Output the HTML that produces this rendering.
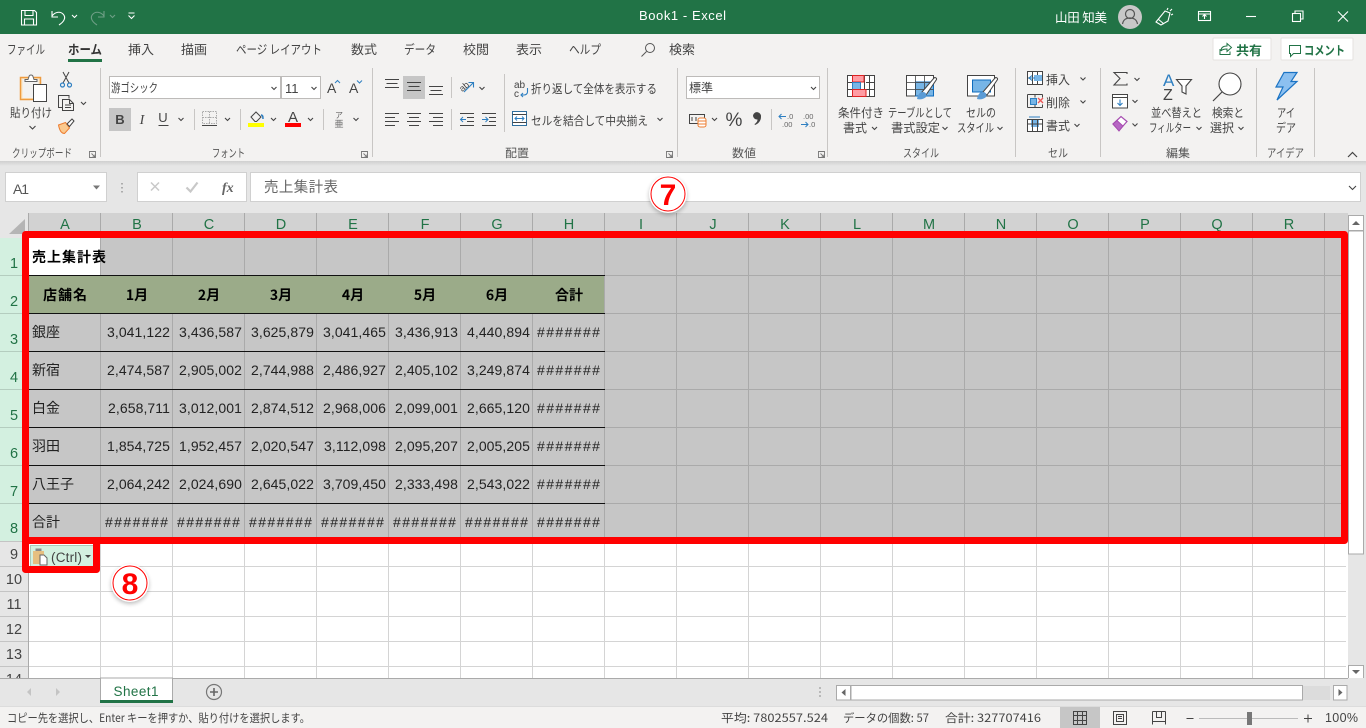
<!DOCTYPE html>
<html lang="ja">
<head>
<meta charset="utf-8">
<title>Book1 - Excel</title>
<style>
html,body{margin:0;padding:0;width:1366px;height:728px;overflow:hidden;background:#fff}
svg{display:block;position:absolute;left:0;top:0}
text{font-family:"Liberation Sans","Noto Sans CJK JP",sans-serif;font-size:12px;fill:#444}
.j{font-family:"Noto Sans CJK JP","Liberation Sans",sans-serif}
.tab{font-size:12.5px;fill:#444}
.gl{font-size:11.5px;fill:#555}
.rb{font-size:12px;fill:#444}
.c{font-size:14px;fill:#222;letter-spacing:.08px}
.cj{font-size:14px;fill:#222;font-family:"Noto Sans CJK JP","Liberation Sans",sans-serif}
.cb{font-size:14px;fill:#000;font-weight:bold;font-family:"Noto Sans CJK JP","Liberation Sans",sans-serif}
.h{font-size:14.5px;fill:#217346;text-anchor:middle}
.r{font-size:14.5px;fill:#217346;text-anchor:middle}
.n{font-size:14.5px;fill:#444;text-anchor:middle}
.st{font-size:12px;fill:#444}
.ch{fill:none;stroke:#444;stroke-width:1.1}
.ic{fill:none;stroke:#444;stroke-width:1}
.sep{stroke:#c8c6c4;stroke-width:1}
</style>
</head>
<body>
<svg width="1366" height="728" viewBox="0 0 1366 728" xmlns="http://www.w3.org/2000/svg">
<defs>
<clipPath id="gridclip"><rect x="0" y="213" width="1348" height="465"/></clipPath>
<filter id="sh" x="-30%" y="-30%" width="160%" height="160%"><feGaussianBlur stdDeviation="2"/></filter>
<linearGradient id="rs" x1="0" y1="0" x2="0" y2="1"><stop offset="0" stop-color="#cfcfcf"/><stop offset="1" stop-color="#e6e6e6"/></linearGradient>
</defs>

<!-- title bar -->
<rect x="0" y="0" width="1366" height="34" fill="#217346"/>
<g fill="none" stroke="#fff" stroke-width="1.1">
<path d="M21.5 10.5h13l2 2v12.5h-15z"/><path d="M25 10.5v5h8v-5"/><path d="M24.5 25v-6h9v6"/>
<path d="M52 11v6h6"/><path d="M52 16c3-4 8-5 11-2 3 3 2 7-4 11"/>
<path d="M72 15l2.500 2.500 2.500-2.500"/>
<g stroke="#6f9f86"><path d="M104 11v6h-6"/><path d="M104 16c-3-4-8-5-11-2-3 3-2 7 4 11"/><path d="M110 15l2.500 2.500 2.500-2.500"/></g>
<path d="M128.500 13h6M128.500 15.500l3 3 3-3"/>
</g>
<text x="639" y="20" fill="#fff" style="fill:#fff;font-size:13px" textLength="87" lengthAdjust="spacing">Book1 - Excel</text>
<text x="1055" y="22" class="j" style="fill:#fff;font-size:12.500px" textLength="52" lengthAdjust="spacing">山田 知美</text>
<circle cx="1130" cy="17" r="12" fill="#c8c8c8"/>
<circle cx="1130" cy="14" r="4.500" fill="none" stroke="#555" stroke-width="1.200"/>
<path d="M1122.500 24c1-5 4-6 7.500-6s6.500 1 7.500 6" fill="none" stroke="#555" stroke-width="1.200"/>
<g fill="none" stroke="#fff" stroke-width="1.100">
<path d="M1161 25l-5-3 9-11 5 2-2 8zM1158 19l6 5M1167 10l1-2M1171 15l2-1M1170 11l2-2"/>
<rect x="1198.500" y="11.500" width="12" height="9"/><path d="M1198.500 14h12M1204.500 19v-4M1202.500 16.500l2-2 2 2"/>
<path d="M1246 16.500h10"/>
<rect x="1292.500" y="13.500" width="8" height="8"/><path d="M1295 13.500v-2.500h8v8h-2.500"/>
<path d="M1338 11.500l10 10M1348 11.500l-10 10"/>
</g>

<!-- ribbon -->
<rect x="0" y="34" width="1366" height="127" fill="#f3f2f1"/>
<rect x="0" y="161" width="1366" height="52" fill="#e6e6e6"/>
<rect x="0" y="161" width="1366" height="5" fill="url(#rs)"/>

<text x="7" y="54" class="tab j" textLength="38" lengthAdjust="spacingAndGlyphs">ファイル</text>
<text x="68" y="54" class="tab j" style="font-weight:bold;fill:#333" textLength="34" lengthAdjust="spacingAndGlyphs">ホーム</text>
<rect x="68" y="59" width="34" height="3" fill="#217346"/>
<text x="128" y="54" class="tab j" textLength="26" lengthAdjust="spacingAndGlyphs">挿入</text>
<text x="181" y="54" class="tab j" textLength="26" lengthAdjust="spacingAndGlyphs">描画</text>
<text x="236" y="54" class="tab j" textLength="86" lengthAdjust="spacingAndGlyphs">ページ レイアウト</text>
<text x="351" y="54" class="tab j" textLength="26" lengthAdjust="spacingAndGlyphs">数式</text>
<text x="404" y="54" class="tab j" textLength="32" lengthAdjust="spacingAndGlyphs">データ</text>
<text x="463" y="54" class="tab j" textLength="26" lengthAdjust="spacingAndGlyphs">校閲</text>
<text x="516" y="54" class="tab j" textLength="26" lengthAdjust="spacingAndGlyphs">表示</text>
<text x="569" y="54" class="tab j" textLength="32" lengthAdjust="spacingAndGlyphs">ヘルプ</text>
<circle cx="650" cy="48" r="4.500" fill="none" stroke="#555"/><path d="M646.500 51.500l-5 5" stroke="#555" fill="none"/>
<text x="669" y="54" class="tab j" textLength="26" lengthAdjust="spacingAndGlyphs">検索</text>

<!-- share / comment -->
<rect x="1213" y="38" width="58" height="22" rx="1" fill="#fff" stroke="#e4e2e0"/>
<rect x="1281" y="38" width="72" height="22" rx="1" fill="#fff" stroke="#e4e2e0"/>
<g fill="none" stroke="#217346" stroke-width="1">
<path d="M1220 49v5.500h10v-3M1221 51c0-4 3-5 6-5v-2.500l4.500 4-4.500 4v-2.500c-3 0-5 .5-6 2"/>
<path d="M1289.500 45.500h11v8h-7l-3 3v-3h-1z"/>
</g>
<text x="1236" y="55" class="j" style="font-size:12.500px;font-weight:bold;fill:#217346" textLength="26" lengthAdjust="spacingAndGlyphs">共有</text>
<text x="1304" y="55" class="j" style="font-size:12.500px;font-weight:bold;fill:#217346" textLength="41" lengthAdjust="spacingAndGlyphs">コメント</text>

<!-- group separators -->
<g class="sep">
<path d="M100.500 68v89M372.500 68v89M677.500 68v89M827.500 68v89M1015.500 68v89M1100.500 68v89M1256.500 68v89M1314.500 68v89"/>
<path d="M194.500 109v21M240.500 109v21M323.500 109v21M451.500 77v21M451.500 109v21M504.500 74v58M771.500 109v21"/>
</g>
<!-- group labels -->
<text x="12" y="157" class="gl j" textLength="60" lengthAdjust="spacingAndGlyphs">クリップボード</text>
<text x="212" y="157" class="gl j" textLength="33" lengthAdjust="spacingAndGlyphs">フォント</text>
<text x="505" y="157" class="gl j" textLength="24" lengthAdjust="spacingAndGlyphs">配置</text>
<text x="732" y="157" class="gl j" textLength="24" lengthAdjust="spacingAndGlyphs">数値</text>
<text x="903" y="157" class="gl j" textLength="36" lengthAdjust="spacingAndGlyphs">スタイル</text>
<text x="1048" y="157" class="gl j" textLength="20" lengthAdjust="spacingAndGlyphs">セル</text>
<text x="1166" y="157" class="gl j" textLength="24" lengthAdjust="spacingAndGlyphs">編集</text>
<text x="1267" y="157" class="gl j" textLength="37" lengthAdjust="spacingAndGlyphs">アイデア</text>
<g fill="none" stroke="#777" stroke-width=".9">
<path d="M89.500 151.500h6v6h-6zM91.500 153.500l3.500 3.500M95 154.500v2.500h-2.500"/>
<path d="M361.500 151.500h6v6h-6zM363.500 153.500l3.500 3.500M367 154.500v2.500h-2.500"/>
<path d="M666.500 151.500h6v6h-6zM668.500 153.500l3.500 3.500M672 154.500v2.500h-2.500"/>
<path d="M818.500 151.500h6v6h-6zM820.500 153.500l3.500 3.500M824 154.500v2.500h-2.500"/>
</g>
<path d="M1348 157l4.500-4.500 4.500 4.500" fill="none" stroke="#444" stroke-width="1.200"/>

<!-- clipboard group -->
<rect x="20.500" y="77.500" width="20" height="22" fill="#fbe3bd" stroke="#ed9b3f" stroke-width="1.500"/>
<rect x="22.500" y="79" width="16" height="19" fill="#f3f2f1"/>
<path d="M25 79.500h3l1-3c.5-2 3.500-2 4 0l1 3h3v2H25z" fill="#fff" stroke="#666"/>
<rect x="33.500" y="84.500" width="13" height="17" fill="#fff" stroke="#444"/>
<text x="10" y="117" class="rb j" textLength="42" lengthAdjust="spacingAndGlyphs">貼り付け</text>
<path d="M29.500 126l3 3 3-3" class="ch"/>
<g fill="none" stroke="#444" stroke-width="1"><path d="M63 72l6 11M69 72l-6 11"/></g>
<g fill="none" stroke="#2e7fc1" stroke-width="1.200"><circle cx="62.500" cy="85" r="2"/><circle cx="69.500" cy="85" r="2"/></g>
<path d="M63 95.500h6v3M63 95.500h-4.500v12h4" class="ic"/><path d="M62.500 99.500h7l4 4v7h-11z M69.500 99.500v4h4M65 105h6M65 107.500h6" class="ic"/>
<path d="M81 102l2.500 2.500 2.500-2.500" class="ch"/>
<path d="M58.500 125l7-2.500 4 5.500-5 5.500c-3 0-5-3-6-8.500z" fill="#fbc98e" stroke="#ed7d31"/>
<path d="M67 124l5-5 2 2-4.500 5.500z" fill="#fff" stroke="#444"/>

<!-- font group -->
<rect x="109.500" y="76.500" width="171" height="22" fill="#fff" stroke="#bdbbb9"/>
<rect x="281.500" y="76.500" width="39" height="22" fill="#fff" stroke="#bdbbb9"/>
<text x="111" y="92" class="rb j" textLength="47" lengthAdjust="spacingAndGlyphs">游ゴシック</text>
<path d="M271.500 87l2.500 2.500 2.500-2.500" class="ch"/>
<text x="285" y="93" class="rb" style="font-size:13px">11</text>
<path d="M311.500 87l2.500 2.500 2.500-2.500" class="ch"/>
<text x="327" y="93" class="rb" style="font-size:14px">A</text>
<path d="M335 83l2.500-2.500 2.500 2.500" fill="none" stroke="#2e7fc1"/>
<text x="349" y="93" class="rb" style="font-size:14px">A</text>
<path d="M357 80.500l2.500 2.500 2.500-2.500" fill="none" stroke="#2e7fc1"/>
<rect x="109" y="108" width="22" height="23" fill="#c6c6c6"/>
<text x="120" y="124" class="rb" style="font-size:13px;font-weight:bold;text-anchor:middle">B</text>
<text x="142" y="124" class="rb" style="font-size:14px;font-style:italic;font-family:'Liberation Serif',serif;text-anchor:middle">I</text>
<text x="163" y="122" class="rb" style="font-size:13px;text-anchor:middle">U</text>
<path d="M158.500 125.500h10" stroke="#444" fill="none"/>
<path d="M178.500 118l2.500 2.500 2.500-2.500" class="ch"/>
<path d="M202.500 111.500h14v12h-14z M209.500 111.500v12M202.500 117.500h14" fill="none" stroke="#aaa" stroke-dasharray="1.500 1"/>
<path d="M202 125.500h15" stroke="#444"/>
<path d="M225 118l2.500 2.500 2.500-2.500" class="ch"/>
<path d="M251 117l5-5 5 5-4.500 4.500h-1.500z" fill="none" stroke="#444"/>
<path d="M261 115c2 0 2 2 2 4" fill="none" stroke="#2e7fc1" stroke-width="1.500"/>
<rect x="248" y="123" width="16" height="4" fill="#ff0"/>
<path d="M271 118l2.500 2.500 2.500-2.500" class="ch"/>
<text x="293" y="122" class="rb" style="font-size:15px;text-anchor:middle">A</text>
<rect x="285" y="123" width="16" height="4" fill="#f00"/>
<path d="M308 118l2.500 2.500 2.500-2.500" class="ch"/>
<text x="339" y="118" class="rb j" style="font-size:8px;fill:#666;text-anchor:middle">ア</text>
<text x="339" y="127" class="rb j" style="font-size:9px;fill:#666;text-anchor:middle">亜</text>
<path d="M353.500 118l2.500 2.500 2.500-2.500" class="ch"/>

<!-- alignment group -->
<rect x="403" y="76" width="22" height="23" fill="#c6c6c6"/>
<g stroke="#444" fill="none">
<path d="M385 79.500h14M386.500 83.500h11M385 87.500h14"/>
<path d="M407 82.500h14M408.500 86.500h11M407 90.500h14"/>
<path d="M429 86.500h14M430.500 90.500h11M429 94.500h14"/>
<path d="M385 113.500h14M385 117.500h10M385 121.500h14M385 125.500h10"/>
<path d="M407 113.500h14M409 117.500h10M407 121.500h14M409 125.500h10"/>
<path d="M429 113.500h14M433 117.500h10M429 121.500h14M433 125.500h10"/>
</g>
<text x="460" y="90" class="rb" style="font-size:9px" transform="rotate(-40 464 88)">ab</text>
<path d="M464 92l9-9M468.500 82.500h5v5" fill="none" stroke="#2e7fc1" stroke-width="1.100"/>
<path d="M479.500 87l2.500 2.500 2.500-2.500" class="ch"/>
<path d="M460 125.500h14M467 121.500h7M467 117.500h7M460 113.500h14" stroke="#444" fill="none"/>
<path d="M466 119.500h-5M463 117l-2.500 2.500 2.500 2.500" stroke="#2e7fc1" fill="none"/>
<path d="M482 125.500h14M489 121.500h7M489 117.500h7M482 113.500h14" stroke="#444" fill="none"/>
<path d="M482 119.500h6M485.500 117l2.500 2.500-2.500 2.500" stroke="#2e7fc1" fill="none"/>
<text x="514" y="88" class="rb" style="font-size:10px">ab</text>
<text x="514" y="97" class="rb" style="font-size:10px">c</text>
<path d="M527.500 88v4c0 2-2 3-3.500 3h-3M523 93l-2 2 2 2" fill="none" stroke="#2e7fc1" stroke-width="1.100"/>
<text x="531" y="93" class="rb j" textLength="126" lengthAdjust="spacingAndGlyphs">折り返して全体を表示する</text>
<rect x="512.500" y="111.500" width="14" height="14" fill="#fff" stroke="#2e6e9e"/>
<path d="M512.500 114.500h14M512.500 122.500h14" stroke="#444"/>
<path d="M515 118.500h9M517 116.500l-2 2 2 2M522 116.500l2 2-2 2" fill="none" stroke="#2e7fc1"/>
<text x="531" y="125" class="rb j" textLength="117" lengthAdjust="spacingAndGlyphs">セルを結合して中央揃え</text>
<path d="M657.500 118l2.500 2.500 2.500-2.500" class="ch"/>

<!-- number group -->
<rect x="686.500" y="76.500" width="133" height="22" fill="#fff" stroke="#bdbbb9"/>
<text x="689" y="92" class="rb j" textLength="24" lengthAdjust="spacingAndGlyphs">標準</text>
<path d="M811 87l2.500 2.500 2.500-2.500" class="ch"/>
<rect x="689.500" y="114.500" width="15" height="9" fill="none" stroke="#444"/>
<path d="M692 117v4M696 117v4" stroke="#444"/>
<rect x="698" y="118" width="8" height="9" rx="2" fill="#fff" stroke="#ed7d31"/>
<path d="M698 121h8M698 124h8" stroke="#ed7d31"/>
<path d="M712 118l2.500 2.500 2.500-2.500" class="ch"/>
<text x="734" y="126" class="rb" style="font-size:19px;text-anchor:middle">%</text>
<path d="M753 115.500a4 4 0 1 1 8 1.500c0 4-3 7-6 8l-.5-1c2-1 3-3 3-4.500a4 4 0 0 1-4.500-4z" fill="#444"/>
<path d="M779 116.500h7M781.500 114l-2.500 2.500 2.500 2.500" fill="none" stroke="#2e7fc1"/>
<text x="787" y="119" class="rb" style="font-size:7.500px;fill:#666">.0</text>
<text x="782" y="127" class="rb" style="font-size:7.500px;fill:#666">.00</text>
<text x="803" y="119" class="rb" style="font-size:7.500px;fill:#666">.00</text>
<path d="M801 124.500h7M805.500 122l2.500 2.500-2.500 2.500" fill="none" stroke="#2e7fc1"/>
<text x="809" y="127" class="rb" style="font-size:7.500px;fill:#666">.0</text>

<!-- style group -->
<rect x="847.500" y="75.500" width="27" height="21" fill="#fff" stroke="#444"/>
<path d="M864.500 75.500v21M869.500 75.500v21M847.500 82.500h5M847.500 89.500h5M866 82.500h9M866 89.500h9" stroke="#444" fill="none"/>
<rect x="852.500" y="75.500" width="11.500" height="6.500" fill="#ff9ca3" stroke="#d22"/>
<rect x="852.500" y="82.500" width="8" height="7" fill="#77b5e6" stroke="#2e7fc1"/>
<rect x="852.500" y="89.500" width="13.500" height="7" fill="#ff9ca3" stroke="#d22"/>
<text x="838" y="117" class="rb j" textLength="46" lengthAdjust="spacingAndGlyphs">条件付き</text>
<text x="843" y="132" class="rb j" textLength="24" lengthAdjust="spacingAndGlyphs">書式</text>
<path d="M872 127l2.500 2.500 2.500-2.500" class="ch"/>

<rect x="906.500" y="75.500" width="27" height="20.500" fill="#fff" stroke="#444"/>
<rect x="915.500" y="82" width="18" height="14" fill="#77b5e6" stroke="#0f6cbd"/>
<path d="M906.500 82.500h27M906.500 89.500h27M915.500 75.500v20M924.500 75.500v20" stroke="#444" fill="none" opacity=".8"/>
<path d="M922 92l12-14c1-1 3 0 2.500 1.500L926 95z" fill="#fff" stroke="#444"/>
<path d="M917 99c1-5 3-7 6-7s4 3 3 5c-2 2-6 3-9 2z" fill="#5b9bd5"/>
<text x="888" y="117" class="rb j" textLength="64" lengthAdjust="spacingAndGlyphs">テーブルとして</text>
<text x="891" y="132" class="rb j" textLength="49" lengthAdjust="spacingAndGlyphs">書式設定</text>
<path d="M942.500 127l2.500 2.500 2.500-2.500" class="ch"/>

<rect x="967.500" y="75.500" width="27" height="20.500" fill="#fff" stroke="#444"/>
<rect x="972.500" y="80" width="18" height="12" fill="#77b5e6" stroke="#0f6cbd"/>
<path d="M983 92l12-14c1-1 3 0 2.500 1.500L987 95z" fill="#fff" stroke="#444"/>
<path d="M977 99c1-5 3-7 6-7s4 3 3 5c-2 2-6 3-9 2z" fill="#5b9bd5"/>
<text x="966" y="117" class="rb j" textLength="30" lengthAdjust="spacingAndGlyphs">セルの</text>
<text x="957" y="132" class="rb j" textLength="37" lengthAdjust="spacingAndGlyphs">スタイル</text>
<path d="M997.500 127l2.500 2.500 2.500-2.500" class="ch"/>

<!-- cells group -->
<rect x="1027.500" y="71.500" width="15" height="13" fill="#fff" stroke="#444"/>
<path d="M1027.500 78h15M1032.500 71.500v13M1037.500 71.500v13" stroke="#444"/>
<rect x="1034" y="75" width="8" height="6" fill="#77b5e6"/>
<path d="M1029 78h6M1032 75.500l-3 2.500 3 2.500" fill="none" stroke="#2e7fc1"/>
<text x="1046" y="84" class="rb j" textLength="24" lengthAdjust="spacingAndGlyphs">挿入</text>
<path d="M1080.500 77.500l2.500 2.500 2.500-2.500" class="ch"/>
<path d="M1027.500 94.500h15M1027.500 107.500h15M1027.500 94.500v13M1035 94.500v3M1035 104.500v3M1042.500 94.500v3M1042.500 104.500v3" stroke="#444" fill="none"/>
<rect x="1030.500" y="98.500" width="6" height="6" fill="#77b5e6" stroke="#2e7fc1"/>
<path d="M1038 98l5 5M1043 98l-5 5" stroke="#e55" stroke-width="1.300"/>
<text x="1046" y="107" class="rb j" textLength="24" lengthAdjust="spacingAndGlyphs">削除</text>
<path d="M1080.500 100.500l2.500 2.500 2.500-2.500" class="ch"/>
<rect x="1027.500" y="119.500" width="15" height="12" fill="#fff" stroke="#444"/>
<rect x="1031" y="120" width="8" height="7" fill="#77b5e6"/>
<path d="M1027.500 124h15M1032.500 119.500v12M1037.500 119.500v12" stroke="#444"/>
<path d="M1029 117h11" stroke="#2e7fc1"/>
<text x="1046" y="130" class="rb j" textLength="24" lengthAdjust="spacingAndGlyphs">書式</text>
<path d="M1074.500 124l2.500 2.500 2.500-2.500" class="ch"/>

<!-- editing group -->
<path d="M1127 74v-1.500h-13l6 6-6 6.500h13v-1.500" fill="none" stroke="#444" stroke-width="1.100"/>
<path d="M1134.500 78l2.500 2.500 2.500-2.500" class="ch"/>
<rect x="1112.500" y="94.500" width="15" height="13.500" fill="#fff" stroke="#444"/>
<path d="M1112.500 97.500h15" stroke="#444"/>
<path d="M1120 99.500v6M1117.500 103l2.500 2.500 2.500-2.500" fill="none" stroke="#2e7fc1" stroke-width="1.100"/>
<path d="M1132.500 100l2.500 2.500 2.500-2.500" class="ch"/>
<path d="M1113 124l8-7.500 6 5-8 9z" fill="#fff" stroke="#a64cb0" stroke-width="1.200"/>
<path d="M1113 124l4-3.500 6 5.500-4 5z" fill="#b767c4" stroke="#a64cb0"/>
<path d="M1132.500 123.500l2.500 2.500 2.500-2.500" class="ch"/>
<text x="1163" y="86" class="rb" style="font-size:17px;fill:#2e7fc1">A</text>
<text x="1163" y="100" class="rb" style="font-size:16px">Z</text>
<path d="M1176.500 79.500h15l-5.500 6.500v8l-4-2v-6z" fill="#fff" stroke="#444" stroke-width="1.100"/>
<text x="1151" y="117" class="rb j" textLength="51" lengthAdjust="spacingAndGlyphs">並べ替えと</text>
<text x="1149" y="132" class="rb j" textLength="42" lengthAdjust="spacingAndGlyphs">フィルター</text>
<path d="M1196.500 127l2.500 2.500 2.500-2.500" class="ch"/>
<circle cx="1230" cy="84" r="11" fill="#fff" stroke="#444" stroke-width="1.100"/>
<path d="M1222 92l-9 9" stroke="#444" stroke-width="1.200"/>
<text x="1212" y="117" class="rb j" textLength="32" lengthAdjust="spacingAndGlyphs">検索と</text>
<text x="1210" y="132" class="rb j" textLength="24" lengthAdjust="spacingAndGlyphs">選択</text>
<path d="M1238.500 127l2.500 2.500 2.500-2.500" class="ch"/>

<!-- ideas -->
<path d="M1284 72.500h13l-6 9h6l-20 18.500 6-13h-7z" fill="#8cc0f0" stroke="#1a73c4" stroke-width="1.200"/>
<text x="1277" y="117" class="rb j" textLength="18" lengthAdjust="spacingAndGlyphs">アイ</text>
<text x="1276" y="132" class="rb j" textLength="20" lengthAdjust="spacingAndGlyphs">デア</text>

<!-- formula bar -->
<rect x="5.500" y="172.500" width="101" height="29" fill="#fff" stroke="#d0d0d0"/>
<text x="13" y="194" style="font-size:14px;fill:#555" textLength="16">A1</text>
<path d="M93 185.500h7l-3.500 4z" fill="#777"/>
<path d="M122 183v1.500M122 187v1.500M122 191v1.500" stroke="#999" stroke-width="1.500"/>
<rect x="137.500" y="172.500" width="109" height="29" fill="#fff" stroke="#d0d0d0"/>
<path d="M151 182.500l8 8M159 182.500l-8 8" stroke="#c8c8c8" stroke-width="1.500"/>
<path d="M186.500 187.500l4 4 7-9" stroke="#c8c8c8" stroke-width="2.200" fill="none"/>
<text x="222" y="192" style="font-size:14px;font-style:italic;font-weight:bold;font-family:'Liberation Serif',serif;fill:#666">fx</text>
<rect x="250.500" y="172.500" width="1110" height="29" fill="#fff" stroke="#d0d0d0"/>
<text x="264" y="192" class="j" style="font-size:14.500px;fill:#666" textLength="74" lengthAdjust="spacing">売上集計表</text>
<path d="M1349 186l3.500 3.500 3.500-3.500" class="ch"/>

<!-- grid headers -->
<rect x="0" y="213" width="1348" height="25" fill="#e6e6e6"/>
<rect x="29" y="213" width="1319" height="25" fill="#d2d2d2"/>
<path d="M25 234V219L9 234z" fill="#b5b5b5"/>
<g stroke="#aaa"><path d="M28.500 213v465M100.500 213v25M172.500 213v25M244.500 213v25M316.500 213v25M388.500 213v25M460.500 213v25M532.500 213v25M604.500 213v25M676.500 213v25M748.500 213v25M820.500 213v25M892.500 213v25M964.500 213v25M1036.500 213v25M1108.500 213v25M1180.500 213v25M1252.500 213v25M1324.500 213v25"/></g>
<text class="h" x="65" y="229">A</text><text class="h" x="137" y="229">B</text><text class="h" x="209" y="229">C</text><text class="h" x="281" y="229">D</text><text class="h" x="353" y="229">E</text><text class="h" x="425" y="229">F</text><text class="h" x="497" y="229">G</text><text class="h" x="569" y="229">H</text><text class="h" x="641" y="229">I</text><text class="h" x="713" y="229">J</text><text class="h" x="785" y="229">K</text><text class="h" x="857" y="229">L</text><text class="h" x="929" y="229">M</text><text class="h" x="1001" y="229">N</text><text class="h" x="1073" y="229">O</text><text class="h" x="1145" y="229">P</text><text class="h" x="1217" y="229">Q</text><text class="h" x="1289" y="229">R</text>

<!-- row headers -->
<rect x="0" y="238" width="28" height="303" fill="#d3f0e0"/>
<rect x="0" y="541" width="28" height="137" fill="#e6e6e6"/>
<g stroke="#b4cdbf"><path d="M0 275.500h28M0 313.500h28M0 351.500h28M0 389.500h28M0 427.500h28M0 465.500h28M0 503.500h28"/></g>
<g stroke="#c4c4c4"><path d="M0 541.500h28M0 566.500h28M0 591.500h28M0 616.500h28M0 641.500h28M0 666.500h28"/></g>
<text class="r" x="14" y="268">1</text><text class="r" x="14" y="306">2</text><text class="r" x="14" y="344">3</text><text class="r" x="14" y="382">4</text><text class="r" x="14" y="420">5</text><text class="r" x="14" y="458">6</text><text class="r" x="14" y="496">7</text><text class="r" x="14" y="533">8</text>
<text class="n" x="14" y="559">9</text><text class="n" x="14" y="584">10</text><text class="n" x="14" y="609">11</text><text class="n" x="14" y="634">12</text><text class="n" x="14" y="659">13</text>
<g clip-path="url(#gridclip)"><text class="n" x="14" y="684">14</text></g>

<!-- cells background -->
<rect x="29" y="238" width="1317" height="303" fill="#c6c6c6"/>
<g stroke="#d4d4d4" fill="none">
<path d="M29 566.500h1317M29 591.500h1317M29 616.500h1317M29 641.500h1317M29 666.500h1317"/>
<path d="M100.500 541v137M172.500 541v137M244.500 541v137M316.500 541v137M388.500 541v137M460.500 541v137M532.500 541v137M604.500 541v137M676.500 541v137M748.500 541v137M820.500 541v137M892.500 541v137M964.500 541v137M1036.500 541v137M1108.500 541v137M1180.500 541v137M1252.500 541v137M1324.500 541v137"/>
</g>
<g stroke="#aaa" fill="none">
<path d="M100.500 238v37M172.500 238v37M244.500 238v37M316.500 238v37M388.500 238v37M460.500 238v37M532.500 238v37"/>
<path d="M100.500 314v223M172.500 314v223M244.500 314v223M316.500 314v223M388.500 314v223M460.500 314v223M532.500 314v223"/>
<path d="M604.500 238v303M676.500 238v303M748.500 238v303M820.500 238v303M892.500 238v303M964.500 238v303M1036.500 238v303M1108.500 238v303M1180.500 238v303M1252.500 238v303M1324.500 238v303"/>
<path d="M604 275.500h742M604 313.500h742M604 351.500h742M604 389.500h742M604 427.500h742M604 465.500h742M604 503.500h742"/>
</g>
<rect x="29" y="238" width="71" height="37" fill="#fff"/>
<rect x="29" y="276" width="575" height="37" fill="#9bab89"/>
<g stroke="#111" fill="none">
<path d="M29 275.500h576M29 313.500h576M29 351.500h576M29 389.500h576M29 427.500h576M29 465.500h576M29 503.500h576"/>
</g>

<!-- cell text -->
<text class="cb" x="32" y="262" textLength="74" lengthAdjust="spacing">売上集計表</text>
<g style="text-anchor:middle">
<text class="cb" x="65" y="300" text-anchor="middle" textLength="44" lengthAdjust="spacing">店舗名</text>
<text class="cb" x="137" y="300" text-anchor="middle">1月</text>
<text class="cb" x="209" y="300" text-anchor="middle">2月</text>
<text class="cb" x="281" y="300" text-anchor="middle">3月</text>
<text class="cb" x="353" y="300" text-anchor="middle">4月</text>
<text class="cb" x="425" y="300" text-anchor="middle">5月</text>
<text class="cb" x="497" y="300" text-anchor="middle">6月</text>
<text class="cb" x="569" y="300" text-anchor="middle">合計</text>
</g>
<text class="cj" x="32" y="337">銀座</text><text class="cj" x="32" y="375">新宿</text><text class="cj" x="32" y="413">白金</text><text class="cj" x="32" y="451">羽田</text><text class="cj" x="32" y="489">八王子</text><text class="cj" x="32" y="527">合計</text>
<g text-anchor="end">
<text class="c" x="170" y="337">3,041,122</text><text class="c" x="242" y="337">3,436,587</text><text class="c" x="314" y="337">3,625,879</text><text class="c" x="386" y="337">3,041,465</text><text class="c" x="458" y="337">3,436,913</text><text class="c" x="530" y="337">4,440,894</text>
<text class="c" x="170" y="375">2,474,587</text><text class="c" x="242" y="375">2,905,002</text><text class="c" x="314" y="375">2,744,988</text><text class="c" x="386" y="375">2,486,927</text><text class="c" x="458" y="375">2,405,102</text><text class="c" x="530" y="375">3,249,874</text>
<text class="c" x="170" y="413">2,658,711</text><text class="c" x="242" y="413">3,012,001</text><text class="c" x="314" y="413">2,874,512</text><text class="c" x="386" y="413">2,968,006</text><text class="c" x="458" y="413">2,099,001</text><text class="c" x="530" y="413">2,665,120</text>
<text class="c" x="170" y="451">1,854,725</text><text class="c" x="242" y="451">1,952,457</text><text class="c" x="314" y="451">2,020,547</text><text class="c" x="386" y="451">3,112,098</text><text class="c" x="458" y="451">2,095,207</text><text class="c" x="530" y="451">2,005,205</text>
<text class="c" x="170" y="489">2,064,242</text><text class="c" x="242" y="489">2,024,690</text><text class="c" x="314" y="489">2,645,022</text><text class="c" x="386" y="489">3,709,450</text><text class="c" x="458" y="489">2,333,498</text><text class="c" x="530" y="489">2,543,022</text>
</g>
<text class="c" x="537" y="337" textLength="63" lengthAdjust="spacing">#######</text>
<text class="c" x="537" y="375" textLength="63" lengthAdjust="spacing">#######</text>
<text class="c" x="537" y="413" textLength="63" lengthAdjust="spacing">#######</text>
<text class="c" x="537" y="451" textLength="63" lengthAdjust="spacing">#######</text>
<text class="c" x="537" y="489" textLength="63" lengthAdjust="spacing">#######</text>
<text class="c" x="105" y="527" textLength="63" lengthAdjust="spacing">#######</text>
<text class="c" x="177" y="527" textLength="63" lengthAdjust="spacing">#######</text>
<text class="c" x="249" y="527" textLength="63" lengthAdjust="spacing">#######</text>
<text class="c" x="321" y="527" textLength="63" lengthAdjust="spacing">#######</text>
<text class="c" x="393" y="527" textLength="63" lengthAdjust="spacing">#######</text>
<text class="c" x="465" y="527" textLength="63" lengthAdjust="spacing">#######</text>
<text class="c" x="537" y="527" textLength="63" lengthAdjust="spacing">#######</text>

<!-- paste options button -->
<rect x="30.500" y="545.500" width="63" height="21" fill="#d3f0e0" stroke="#a9c9b8"/>
<rect x="33" y="551" width="11" height="13" fill="#e6bf80"/>
<path d="M36 551v-2h5v2" fill="#888" stroke="#888"/>
<path d="M40 555h4l3 3v7h-7z" fill="#fff" stroke="#666"/>
<text x="51" y="562" style="font-size:13.500px;fill:#444" textLength="31">(Ctrl)</text>
<path d="M85 555h6l-3 3z" fill="#444"/>

<!-- red frames -->
<path d="M25.500 234.500H1344.500V540.500H25.500z" fill="none" stroke="#f00" stroke-width="7" stroke-linejoin="round"/>
<path d="M25.500 540.500V569.500H96.500V540.500" fill="none" stroke="#f00" stroke-width="7" stroke-linejoin="round"/>

<!-- callouts -->
<circle cx="668" cy="196" r="19" fill="#000" opacity=".25" filter="url(#sh)"/>
<circle cx="668" cy="194" r="19" fill="#fff"/>
<circle cx="668" cy="194" r="17" fill="#fff" stroke="#f00" stroke-width="1"/>
<text x="668" y="205" text-anchor="middle" style="font-size:30px;font-weight:bold;fill:#f00">7</text>
<circle cx="130" cy="585" r="19" fill="#000" opacity=".25" filter="url(#sh)"/>
<circle cx="130" cy="583" r="19" fill="#fff"/>
<circle cx="130" cy="583" r="17" fill="#fff" stroke="#f00" stroke-width="1"/>
<text x="130" y="594" text-anchor="middle" style="font-size:30px;font-weight:bold;fill:#f00">8</text>

<!-- vertical scrollbar -->
<rect x="1348" y="213" width="18" height="465" fill="#e6e6e6"/>
<rect x="1348.500" y="215.500" width="15" height="15" fill="#fff" stroke="#aaa"/>
<path d="M1352 225h8l-4-4z" fill="#666"/>
<rect x="1348.500" y="231" width="15" height="323" fill="#fff" stroke="#aaa"/>
<rect x="1348.500" y="665.500" width="15" height="13" fill="#fff" stroke="#aaa"/>
<path d="M1352 670h8l-4 4z" fill="#666"/>

<!-- tab bar -->
<rect x="0" y="678" width="1366" height="28" fill="#e6e6e6"/>
<path d="M0 678.500h1348" stroke="#aaa"/>
<path d="M31 688v8l-4-4z" fill="#c4c4c4"/><path d="M56 688v8l4-4z" fill="#c4c4c4"/>
<rect x="100.500" y="678" width="72" height="24" fill="#fff" stroke="#aaa"/>
<rect x="100" y="700" width="73" height="3" fill="#217346"/>
<text x="136" y="696" text-anchor="middle" style="font-size:13.500px;fill:#217346" textLength="45" lengthAdjust="spacing">Sheet1</text>
<circle cx="214" cy="692" r="7.500" fill="none" stroke="#777" stroke-width="1.200"/>
<path d="M210 692h8M214 688v8" stroke="#666" stroke-width="1.600"/>
<path d="M820 687v2M820 691v2M820 695v2" stroke="#aaa" stroke-width="1.500"/>
<rect x="836.500" y="685.500" width="14" height="14.500" fill="#fff" stroke="#aaa"/>
<path d="M845.500 689v7l-4-3.500z" fill="#666"/>
<rect x="851" y="685.500" width="451.500" height="14.500" fill="#fff" stroke="#aaa"/>
<rect x="1303" y="686" width="27" height="14" fill="#dcdcdc"/>
<rect x="1333.500" y="685.500" width="13.500" height="14.500" fill="#fff" stroke="#aaa"/>
<path d="M1338.500 689v7l4-3.500z" fill="#666"/>

<!-- status bar -->
<rect x="0" y="706" width="1366" height="22" fill="#f3f2f1"/>
<path d="M0 706.500h1366" stroke="#dcdcdc"/>
<text x="7" y="722" class="st j" style="font-size:11.500px" textLength="303" lengthAdjust="spacingAndGlyphs">コピー先を選択し、Enter キーを押すか、貼り付けを選択します。</text>
<text x="721" y="722" class="st j" style="font-size:11.500px" textLength="107" lengthAdjust="spacingAndGlyphs">平均: 7802557.524</text>
<text x="843" y="722" class="st j" style="font-size:11.500px" textLength="86" lengthAdjust="spacingAndGlyphs">データの個数: 57</text>
<text x="945" y="722" class="st j" style="font-size:11.500px" textLength="96" lengthAdjust="spacingAndGlyphs">合計: 327707416</text>
<rect x="1060" y="707" width="40" height="21" fill="#c6c6c6"/>
<g fill="none" stroke="#444">
<path d="M1073.500 711.500h13v13h-13zM1073.500 715.500h13M1073.500 720.500h13M1077.500 711.500v13M1082.500 711.500v13"/>
<path d="M1113.500 711.500h13v13h-13zM1116.500 714.500h7v7h-7zM1118 716.500h4M1118 718.500h4"/>
<path d="M1152.500 711.500v13M1165.500 711.500v13M1152.500 721.500h13M1156.500 711.500v6h5v-6M1152.500 711.500h13"/>
<path d="M1186.500 718.500h7M1304 718.500h8M1308 714.500v8"/>
</g>
<path d="M1199 718.500h99" stroke="#bbb"/>
<rect x="1247" y="712" width="5" height="13" fill="#777"/>
<text x="1325" y="722" class="st" style="font-size:12.500px" textLength="33">100%</text>
</svg>
</body>
</html>
